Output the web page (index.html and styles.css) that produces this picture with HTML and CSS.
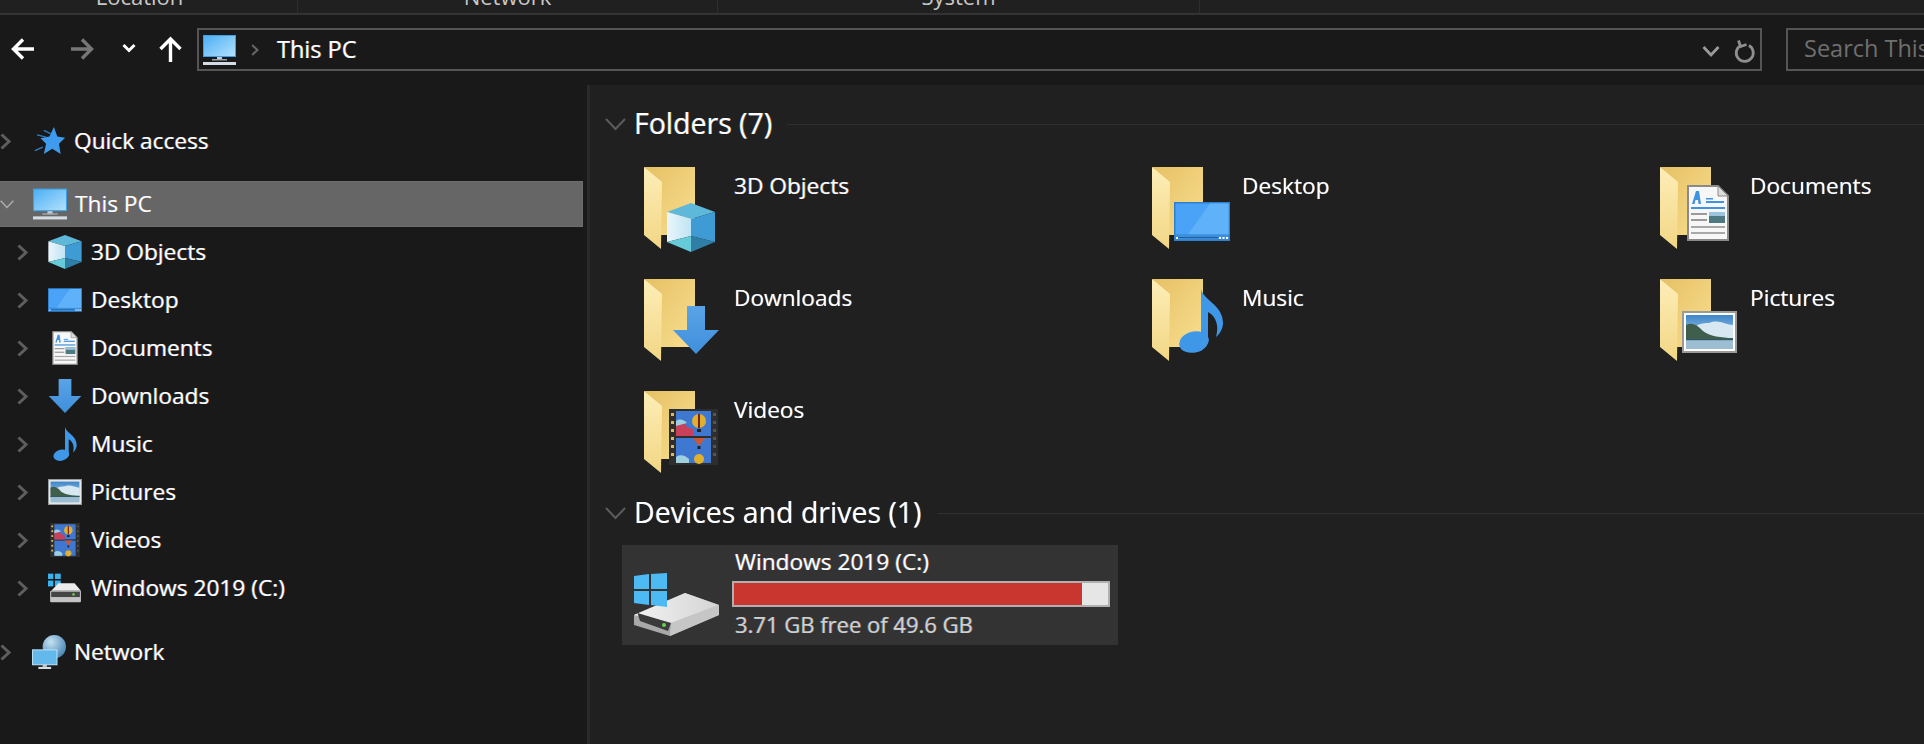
FILE: index.html
```html
<!DOCTYPE html>
<html lang="en">
<head>
<meta charset="utf-8">
<title>This PC</title>
<link rel="stylesheet" href="styles.css">
</head>
<body>
<svg class="defs" aria-hidden="true">
  <defs>
    <linearGradient id="gBack" x1="0" y1="0" x2="1" y2="1"><stop offset="0" stop-color="#e6c064"/><stop offset="1" stop-color="#f8df90"/></linearGradient>
    <linearGradient id="gFlap" x1="0" y1="0" x2="0" y2="1"><stop offset="0" stop-color="#fdeeb8"/><stop offset="1" stop-color="#f2d684"/></linearGradient>
    <linearGradient id="gScreen" x1="0" y1="0" x2="1" y2="1"><stop offset="0" stop-color="#4aaef5"/><stop offset="1" stop-color="#b4e2fc"/></linearGradient>
    <linearGradient id="gLeft" x1="0" y1="0" x2="1" y2="0"><stop offset="0" stop-color="#eaf6fb"/><stop offset="1" stop-color="#bfe4f3"/></linearGradient>
    <linearGradient id="gArrow" x1="0" y1="0" x2="0" y2="1"><stop offset="0" stop-color="#5aa3e6"/><stop offset="1" stop-color="#3f8fdc"/></linearGradient>
    <linearGradient id="gSky" x1="0" y1="0" x2="0" y2="1"><stop offset="0" stop-color="#3f86c9"/><stop offset="1" stop-color="#cfe6f5"/></linearGradient>
    <linearGradient id="gDrive" x1="0" y1="0" x2="1" y2="0"><stop offset="0" stop-color="#f2f2f2"/><stop offset="1" stop-color="#d4d4d4"/></linearGradient>
    <radialGradient id="gGlobe" cx=".35" cy=".3" r=".8"><stop offset="0" stop-color="#c6e2f2"/><stop offset="1" stop-color="#3f7fb0"/></radialGradient>

    <symbol id="folder" viewBox="0 0 52 82">
      <path d="M0 0H51V68H17V20Z" fill="url(#gBack)"/>
      <path d="M0 0L18 15L17 82L0 68Z" fill="url(#gFlap)"/>
    </symbol>
    <symbol id="monitor" viewBox="0 0 33 30">
      <rect x=".5" y=".5" width="32" height="21" fill="url(#gScreen)" stroke="#3f9fe0"/>
      <rect x="14" y="22" width="5" height="3" fill="#c9ced3"/>
      <rect x="9" y="24" width="15" height="1.500" fill="#9aa2a9"/>
      <rect x="0" y="27" width="33" height="3" fill="#d4dde4"/>
    </symbol>
    <symbol id="star" viewBox="0 0 27 25">
      <path d="M17 0L20 8.500L27 9.500L21.500 15L23 24L15.500 19.500L8 24L10 15L5 10L13 8.500Z" fill="#3f9bee"/>
      <path d="M8 3L14 6M2 7L10 9M0 21L7 18" stroke="#2f7fc8" stroke-width="1.200"/>
    </symbol>
    <symbol id="cube" viewBox="0 0 48 49">
      <path d="M24 0L48 9L24 16L0 9Z" fill="#5db8da"/>
      <path d="M0 9L24 16V33L0 39Z" fill="url(#gLeft)"/>
      <path d="M48 9L24 16V33L48 39Z" fill="#3f9bd4"/>
      <path d="M0 39L24 33V49Z" fill="#66cbd8"/>
      <path d="M48 39L24 33V49Z" fill="#2f7ea5"/>
    </symbol>
    <symbol id="desk" viewBox="0 0 56 39">
      <rect width="56" height="39" fill="#2f7fcb"/>
      <rect x="1.500" y="1.500" width="53" height="31" fill="#4aa3f6"/>
      <path d="M14 32.500L36 1.500H54.500V32.500Z" fill="#5fb2fa"/>
      <rect x="1.500" y="32.500" width="53" height="5" fill="#3d8fdc"/>
      <rect x="4" y="35" width="40" height="1" fill="#1f5f9f"/>
      <rect x="2" y="35" width="2" height="2" fill="#fff"/>
      <rect x="45" y="35" width="2" height="2" fill="#fff"/>
      <rect x="48.500" y="35" width="2" height="2" fill="#fff"/>
      <rect x="52" y="35" width="2" height="2" fill="#fff"/>
    </symbol>
    <symbol id="doc" viewBox="0 0 42 56">
      <path d="M1 1H31L41 11V55H1Z" fill="#f7f7f7" stroke="#8a8a8a" stroke-width="2"/>
      <path d="M31 1V11H41Z" fill="#dcdcdc" stroke="#8a8a8a"/>
      <path d="M5 19L9 6H12L14 19H11.500L11 15H8.500L7.500 19Z" fill="#3f93e0"/>
      <rect x="19" y="13" width="7" height="1.500" fill="#3f93e0"/>
      <rect x="19" y="16" width="18" height="2" fill="#3f93e0"/>
      <rect x="4" y="22" width="34" height="2" fill="#3f93e0"/>
      <rect x="4" y="28" width="16" height="2" fill="#9a9a9a"/>
      <rect x="4" y="34" width="16" height="2" fill="#9a9a9a"/>
      <rect x="22" y="27" width="16" height="11" fill="#4c7a80"/>
      <rect x="22" y="27" width="16" height="4" fill="#9cc4dc"/>
      <rect x="4" y="41" width="34" height="2" fill="#a8a8a8"/>
      <rect x="4" y="47" width="34" height="2" fill="#a8a8a8"/>
    </symbol>
    <symbol id="down" viewBox="0 0 46 48">
      <path d="M14 0H32V24H46L23 48L0 24H14Z" fill="url(#gArrow)"/>
    </symbol>
    <symbol id="note" viewBox="0 0 44 64">
      <ellipse cx="15" cy="53" rx="15" ry="10.500" transform="rotate(-14 15 53)" fill="#3f97e8"/>
      <path d="M22 0C25 12 44 16 44 34C44 40 40 46 37 48C40 38 38 28 29 23V52L22 52Z" fill="#3f97e8"/>
    </symbol>
    <symbol id="pic" viewBox="0 0 55 42">
      <rect x="1" y="1" width="53" height="40" fill="#fff" stroke="#9a9a9a" stroke-width="2"/>
      <rect x="4" y="4" width="47" height="34" fill="url(#gSky)"/>
      <path d="M14 15C20 11 26 13 30 11C38 9 44 14 51 14V27H14Z" fill="#d8e8f2"/>
      <path d="M4 14C9 11 15 13 21 20C27 25 40 27 51 27V29H4Z" fill="#3f5f4c"/>
      <rect x="4" y="28" width="47" height="1.500" fill="#31566a"/>
      <rect x="4" y="29.500" width="47" height="8.500" fill="#9cbdd2"/>
    </symbol>
    <symbol id="film" viewBox="0 0 49 56">
      <rect width="49" height="56" fill="#2e2e2e"/>
      <g fill="#d8bb62"><rect x="2" y="4" width="3" height="3"/><rect x="2" y="12" width="3" height="3"/><rect x="2" y="20" width="3" height="3"/><rect x="2" y="28" width="3" height="3"/><rect x="2" y="36" width="3" height="3"/><rect x="2" y="44" width="3" height="3"/></g>
      <g fill="#555"><rect x="44" y="4" width="3" height="3"/><rect x="44" y="12" width="3" height="3"/><rect x="44" y="20" width="3" height="3"/><rect x="44" y="28" width="3" height="3"/><rect x="44" y="36" width="3" height="3"/><rect x="44" y="44" width="3" height="3"/></g>
      <rect x="7" y="2" width="35" height="25" fill="#3f78d0"/>
      <rect x="7" y="29" width="35" height="25" fill="#3f78d0"/>
      <path d="M7 14L14 12L18 18L24 20V27H7Z" fill="#c8405a"/>
      <path d="M7 12C11 9 15 11 18 14L7 17Z" fill="#9fd0e0"/>
      <circle cx="30" cy="12" r="7" fill="#e0b030"/>
      <path d="M29 5h2v14h-2z" fill="#7a2020"/>
      <rect x="28" y="20" width="4" height="3" fill="#222"/>
      <path d="M24 29H36L31 36H29Z" fill="#c85838"/>
      <rect x="28.500" y="37" width="3" height="3" fill="#222"/>
      <path d="M7 48C11 45 16 46 20 50V54H7Z" fill="#9fd0e0"/>
      <circle cx="30" cy="50" r="5" fill="#e0b030"/>
    </symbol>
    <symbol id="windrive" viewBox="0 0 85 64">
      <path d="M0 42L51 20L85 32V42L36 63L0 52Z" fill="#a8a8a8"/>
      <path d="M37 50L85 32V42L36 63Z" fill="#c6c6c6"/>
      <path d="M0 42L51 20L85 32L37 50Z" fill="url(#gDrive)"/>
      <path d="M3.500 40L37 50L34 58L6 48Z" fill="#3a3a3a"/>
      <circle cx="30" cy="52" r="2" fill="#63d24a"/>
      <path d="M0 3L15 1V16H0Z" fill="#4dbaf4"/>
      <path d="M17 1L33 0V16H17Z" fill="#4dbaf4"/>
      <path d="M0 18H15V32L0 30Z" fill="#4dbaf4"/>
      <path d="M17 18H33V34L17 32Z" fill="#4dbaf4"/>
    </symbol>
    <symbol id="smalldrive" viewBox="0 0 32 27">
      <g fill="#39b3f0"><rect x="0" y="0" width="5" height="5"/><rect x="6.500" y="0" width="5.500" height="5"/><rect x="0" y="6.500" width="5" height="5.500"/><rect x="6.500" y="6.500" width="5.500" height="5.500"/></g>
      <path d="M3 16L10 9H25L31 16Z" fill="#ececec"/>
      <rect x="2" y="16" width="29" height="11" rx="1" fill="#c4c4c4"/>
      <rect x="3" y="17" width="27" height="5" fill="#454545"/>
      <circle cx="24" cy="19.500" r="1.200" fill="#63d24a"/>
    </symbol>
    <symbol id="net" viewBox="0 0 32 32">
      <circle cx="21" cy="11" r="11" fill="url(#gGlobe)"/>
      <rect x=".5" y="14" width="23" height="14" fill="#63b8ec" stroke="#b8e0f5"/>
      <rect x="10" y="28" width="4" height="2" fill="#c9ced3"/>
      <rect x="6" y="30" width="12" height="2" fill="#d4dde4"/>
    </symbol>
    <symbol id="chev" viewBox="0 0 13 17">
      <path d="M2.500 1.500L10 8.500L2.500 15.500" fill="none" stroke="currentColor" stroke-width="3"/>
    </symbol>
    <symbol id="chevdown" viewBox="0 0 21 13">
      <path d="M1 1L10.500 11L20 1" fill="none" stroke="currentColor" stroke-width="2"/>
    </symbol>
  </defs>
</svg>

<div class="app">
  <div class="ribbon">
    <div class="ribbon-group g1"><span>Location</span></div>
    <div class="ribbon-group g2"><span>Network</span></div>
    <div class="ribbon-group g3"><span>System</span></div>
  </div>

  <div class="toolbar">
    <svg class="tool back" viewBox="0 0 24 22"><path d="M23 11H3M12 1.500L2.500 11L12 20.500" fill="none" stroke="currentColor" stroke-width="3.400"/></svg>
    <svg class="tool forward" viewBox="0 0 24 22"><path d="M1 11H21M12 1.500L21.500 11L12 20.500" fill="none" stroke="currentColor" stroke-width="3.400"/></svg>
    <svg class="tool recent" viewBox="0 0 14 10"><path d="M1.500 2L7 7.500L12.500 2" fill="none" stroke="currentColor" stroke-width="3"/></svg>
    <svg class="tool up" viewBox="0 0 23 25"><path d="M11.500 25V3M1.500 12L11.500 2L21.500 12" fill="none" stroke="currentColor" stroke-width="3.400"/></svg>
    <div class="address">
      <svg class="addr-icon"><use href="#monitor"/></svg>
      <svg class="addr-chev"><use href="#chev"/></svg>
      <span class="addr-text">This PC</span>
      <svg class="addr-drop" viewBox="0 0 18 12"><path d="M1.500 2L9 10L16.500 2" fill="none" stroke="currentColor" stroke-width="2.800"/></svg>
      <svg class="addr-refresh" viewBox="0 0 21 24"><path d="M6 6.800A8.500 8.500 0 1 0 15 6.500M4.500 1.500L6.500 7.500L12.500 5.500" fill="none" stroke="currentColor" stroke-width="2.800"/></svg>
    </div>
    <div class="search">Search This PC</div>
  </div>

  <div class="main">
    <nav class="sidebar">
      <div class="tree-row top"><svg class="chev"><use href="#chev"/></svg><svg class="nav-icon star"><use href="#star"/></svg><span>Quick access</span></div>

      <div class="tree-group">
        <div class="tree-row top selected"><svg class="chev open"><use href="#chevdown"/></svg><svg class="nav-icon"><use href="#monitor"/></svg><span>This PC</span></div>
        <div class="tree-row child"><svg class="chev"><use href="#chev"/></svg><svg class="nav-icon"><use href="#cube"/></svg><span>3D Objects</span></div>
        <div class="tree-row child"><svg class="chev"><use href="#chev"/></svg><svg class="nav-icon"><use href="#desk"/></svg><span>Desktop</span></div>
        <div class="tree-row child"><svg class="chev"><use href="#chev"/></svg><svg class="nav-icon"><use href="#doc"/></svg><span>Documents</span></div>
        <div class="tree-row child"><svg class="chev"><use href="#chev"/></svg><svg class="nav-icon"><use href="#down"/></svg><span>Downloads</span></div>
        <div class="tree-row child"><svg class="chev"><use href="#chev"/></svg><svg class="nav-icon"><use href="#note"/></svg><span>Music</span></div>
        <div class="tree-row child"><svg class="chev"><use href="#chev"/></svg><svg class="nav-icon"><use href="#pic"/></svg><span>Pictures</span></div>
        <div class="tree-row child"><svg class="chev"><use href="#chev"/></svg><svg class="nav-icon"><use href="#film"/></svg><span>Videos</span></div>
        <div class="tree-row child"><svg class="chev"><use href="#chev"/></svg><svg class="nav-icon"><use href="#smalldrive"/></svg><span>Windows 2019 (C:)</span></div>
      </div>

      <div class="tree-group">
        <div class="tree-row top"><svg class="chev"><use href="#chev"/></svg><svg class="nav-icon"><use href="#net"/></svg><span>Network</span></div>
      </div>
    </nav>

    <section class="content">
      <header class="group-head">
        <svg class="group-chev"><use href="#chevdown"/></svg>
        <h2>Folders (7)</h2>
        <div class="group-rule"></div>
      </header>
      <div class="folder-grid">
        <div class="folder-item">
          <svg class="folder-icon" viewBox="0 0 78 85"><use href="#folder" width="52" height="82"/><use href="#cube" x="23" y="36" width="48" height="49"/></svg>
          <span>3D Objects</span>
        </div>
        <div class="folder-item">
          <svg class="folder-icon" viewBox="0 0 78 85"><use href="#folder" width="52" height="82"/><use href="#desk" x="22" y="35" width="56" height="39"/></svg>
          <span>Desktop</span>
        </div>
        <div class="folder-item">
          <svg class="folder-icon" viewBox="0 0 78 85"><use href="#folder" width="52" height="82"/><use href="#doc" x="27" y="18" width="42" height="56"/></svg>
          <span>Documents</span>
        </div>
        <div class="folder-item">
          <svg class="folder-icon" viewBox="0 0 78 85"><use href="#folder" width="52" height="82"/><use href="#down" x="29" y="27" width="46" height="48"/></svg>
          <span>Downloads</span>
        </div>
        <div class="folder-item">
          <svg class="folder-icon" viewBox="0 0 78 85"><use href="#folder" width="52" height="82"/><use href="#note" x="27" y="10" width="44" height="64"/></svg>
          <span>Music</span>
        </div>
        <div class="folder-item">
          <svg class="folder-icon" viewBox="0 0 78 85"><use href="#folder" width="52" height="82"/><use href="#pic" x="22" y="32" width="55" height="42"/></svg>
          <span>Pictures</span>
        </div>
        <div class="folder-item">
          <svg class="folder-icon" viewBox="0 0 78 85"><use href="#folder" width="52" height="82"/><use href="#film" x="25" y="18" width="49" height="56"/></svg>
          <span>Videos</span>
        </div>
      </div>

      <header class="group-head devices">
        <svg class="group-chev"><use href="#chevdown"/></svg>
        <h2>Devices and drives (1)</h2>
        <div class="group-rule"></div>
      </header>
      <div class="drive-tile">
        <svg class="drive-icon"><use href="#windrive"/></svg>
        <div class="drive-info">
          <div class="drive-name">Windows 2019 (C:)</div>
          <div class="drive-bar"><div class="drive-used" style="width:93%"></div></div>
          <div class="drive-free">3.71 GB free of 49.6 GB</div>
        </div>
      </div>
    </section>
  </div>
</div>
</body>
</html>
```

FILE: styles.css
```css
* { box-sizing: border-box; }
html, body { margin: 0; padding: 0; background: #191919; }
body { width: 1924px; height: 744px; overflow: hidden; font-family: "Open Sans", "Noto Sans", sans-serif; font-size: 22.7px; color: #fff; }
.defs { position: absolute; width: 0; height: 0; }
svg { display: block; flex: none; overflow: visible; }

.app { display: flex; flex-direction: column; height: 744px; filter: blur(.35px); }
.tree-row span, .folder-item span, .addr-text, h2, .drive-name, .drive-free {
  text-shadow: -.6px 0 rgba(80,160,255,.55), .6px 0 rgba(255,170,90,.55);
}

.ribbon { display: flex; flex: none; height: 15px; background: #202020; border-bottom: 2px solid #333; overflow: hidden; }
.ribbon-group { display: flex; justify-content: center; align-items: flex-end; height: 13px; padding-bottom: 5px; border-right: 1px solid #2d2d2d; color: #c8c8c8; font-size: 22px; line-height: 24px; }
.g1 { width: 298px; padding-right: 18px; }
.g2 { width: 420px; }
.g3 { width: 482px; }

.toolbar { display: flex; flex: none; height: 70px; padding: 13px 0 0 11px; background: #191919; align-items: flex-start; }
.tool { color: #fff; }
.back { width: 24px; height: 22px; margin-top: 10px; }
.forward { width: 24px; height: 22px; margin: 10px 0 0 35px; color: #777; }
.recent { width: 14px; height: 10px; margin: 15px 0 0 28px; }
.up { width: 23px; height: 25px; margin: 9px 0 0 23px; }
.address { flex: none; display: flex; align-items: center; width: 1565px; height: 43px; margin-left: 15px; padding: 0 5px 2px 4px; background: #191919; border: 2px solid #555; font-size: 23.5px; }
.addr-icon { width: 33px; height: 30px; margin-top: 2px; }
.addr-chev { width: 10px; height: 12px; margin: 2px 0 0 14px; color: #666; }
.addr-text { margin-left: 17px; flex: 1; }
.addr-drop { width: 18px; height: 12px; margin-top: 4px; color: #9a9a9a; }
.addr-refresh { width: 21px; height: 24px; margin: 4px 0 0 14px; color: #8f8f8f; }
.search { flex: none; width: 138px; height: 43px; margin-left: 24px; padding-left: 16px; border: 2px solid #555; border-right: 0; color: #6f6f6f; font-size: 23.5px; line-height: 36px; white-space: nowrap; overflow: hidden; }

.main { display: flex; flex: 1; min-height: 0; }
.sidebar { flex: none; width: 590px; padding-top: 32px; background: #191919; border-right: 3px solid #2a2a2a; }
.tree-group { margin-top: 16px; }
.tree-row { display: flex; align-items: center; height: 48px; margin-right: 4px; white-space: nowrap; }
.tree-row span { margin-top: -2px; }
.tree-row.top .chev { width: 13px; margin: 0 20px 0 -1px; }
.tree-row.child .chev { margin-left: 16px; margin-right: 19px; }
.tree-row.top span { margin-left: 8px; }
.tree-row.child span { margin-left: 9px; }
.chev { width: 13px; height: 17px; color: #5e5e5e; }
.tree-row.top .chev.open { width: 14px; height: 11px; margin: 0 19px 0 0; color: #b0b0b0; }
.nav-icon { width: 34px; height: 34px; }
.nav-icon.star { width: 34px; height: 28px; margin-left: 1px; margin-right: -1px; }
.selected { height: 46px; margin-top: 1px; margin-bottom: 1px; background: #666; border: 1px solid #6e6e6e; border-left: 0; }

.content { flex: 1; min-width: 0; padding: 24px 0 0 15px; background: #202020; }
.group-head { display: flex; align-items: center; height: 30px; }
.group-chev { width: 21px; height: 13px; color: #5c5c5c; }
h2 { margin: -3px 0 0 8px; font-size: 28.5px; font-weight: 400; line-height: 30px; white-space: nowrap; }
.group-rule { flex: 1; height: 1px; margin-left: 15px; background: #303030; }
.folder-grid { display: grid; grid-template-columns: repeat(3, 508px); grid-auto-rows: 112px; margin: 21px 0 0 38px; }
.folder-item { display: flex; align-items: flex-start; gap: 13px; padding-top: 7px; line-height: 38px; }
.folder-icon { width: 78px; height: 85px; margin-left: 1px; margin-right: -1px; }
.devices { margin-top: 2px; }
.drive-tile { display: flex; align-items: flex-start; width: 496px; height: 100px; margin: 17px 0 0 17px; padding-left: 12px; background: #333; }
.drive-icon { width: 85px; height: 64px; margin-top: 28px; }
.drive-info { margin-left: 13px; }
.drive-name, .drive-free { padding-left: 3px; line-height: 34px; height: 36px; }
.drive-free { color: #d0d0d0; font-size: 22px; }
.drive-bar { width: 378px; height: 26px; background: #e6e6e6; border: 2px solid #b0b0b0; }
.drive-used { height: 100%; background: #c9352f; }
```
